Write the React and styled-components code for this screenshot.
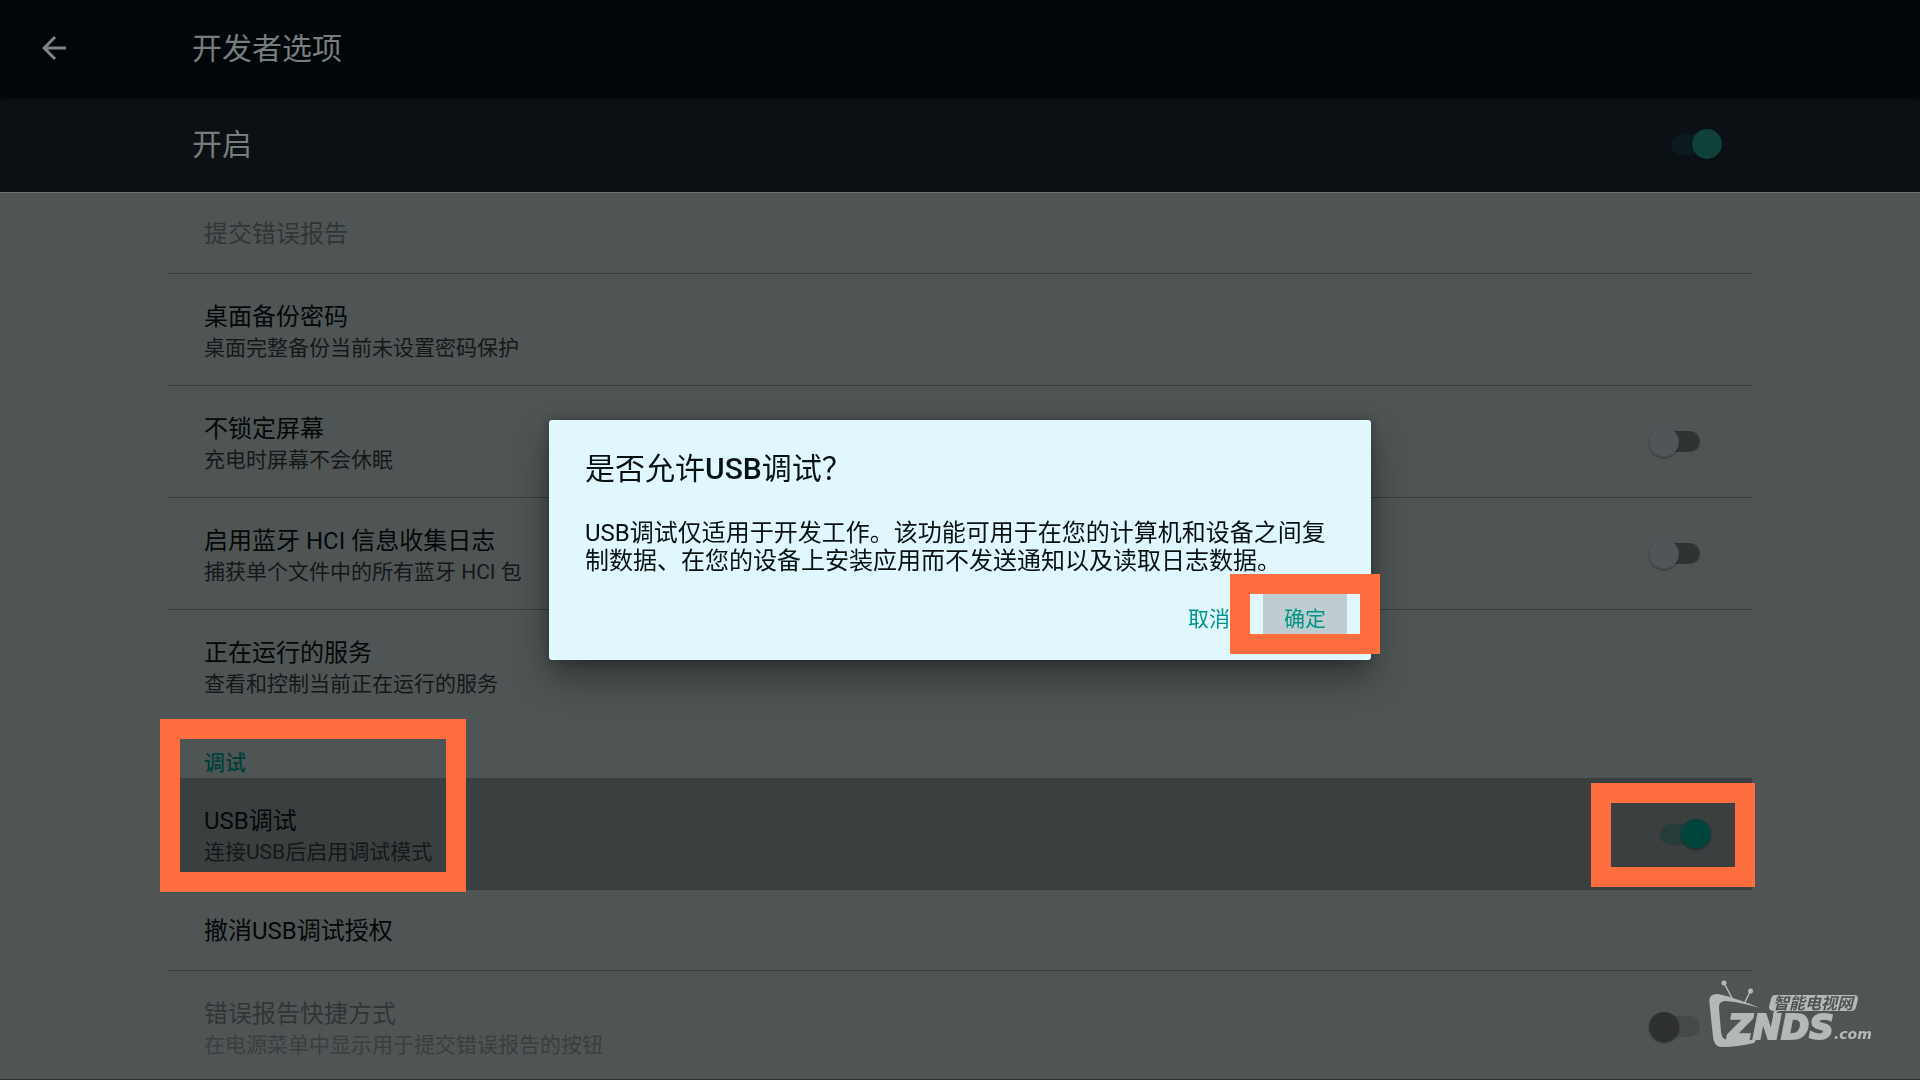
import React, { useState } from 'react'
import styled, { createGlobalStyle } from 'styled-components'
import { MdArrowBack } from 'react-icons/md'

const GlobalStyle = createGlobalStyle`
  * {
    box-sizing: border-box;
  }

  body {
    margin: 0;
    background: #4f5555;
    font-family: Roboto, 'Noto Sans CJK SC', sans-serif;
  }
`

const Page = styled.div`
  display: flex;
  flex-direction: column;
  height: 100vh;
  overflow: hidden;
`

const Header = styled.header`
  position: relative;
  display: flex;
  align-items: center;
  gap: 120px;
  height: 96px;
  padding: 0 36px;
  background: #010708;
  box-shadow: 0 2px 3px #010708;
  color: #777c7d;
  flex-shrink: 0;
`

const BackButton = styled.button`
  display: flex;
  padding: 0;
  border: 0;
  background: none;
  color: #7d8282;
  font-size: 36px;
`

const Title = styled.h1`
  margin: 0;
  padding-top: 2px;
  font-size: 30px;
  font-weight: 400;
  line-height: 36px;
`

const MasterBar = styled.div`
  display: flex;
  align-items: center;
  justify-content: space-between;
  height: 96px;
  padding: 0 198px 0 192px;
  background: #0a1013;
  color: #777c7d;
  flex-shrink: 0;
`

const MasterLabel = styled.label`
  padding-top: 2px;
  font-size: 30px;
  line-height: 36px;
`

const Switch = styled.input.attrs({ type: 'checkbox', role: 'switch' })`
  appearance: none;
  display: grid;
  align-items: center;
  width: 62px;
  height: 32px;
  margin: 0;
  flex-shrink: 0;

  &::before,
  &::after {
    content: '';
    grid-area: 1 / 1;
  }

  &::before {
    height: 21px;
    margin: 0 11px;
    border-radius: 11px;
    background: #303333;
  }

  &::after {
    width: 30px;
    height: 30px;
    border-radius: 50%;
    background: #505657;
    box-shadow: 0 1px 2px rgba(0, 0, 0, 0.4);
  }

  &:checked::before {
    background: ${props => (props.$dark ? '#0a1a1e' : '#263c39')};
  }

  &:checked::after {
    justify-self: end;
    background: ${props => (props.$dark ? '#10403a' : '#00463d')};
  }

  &:disabled::before {
    background: #444949;
  }

  &:disabled::after {
    background: #2f3131;
  }
`

const List = styled.main`
  flex: 1;
  min-height: 0;
  overflow: hidden;
  padding: 0 168px;
  border-top: 1px solid #6c7272;
  border-bottom: 1px solid #2e3232;
  background: #4f5555;
`

const Row = styled.div`
  position: relative;
  display: flex;
  align-items: center;
  justify-content: space-between;
  min-height: ${props => (props.$single ? 81 : props.$last ? 111 : 112)}px;
  padding: 0 41px 0 36px;
  border-bottom: ${props =>
    props.$last || props.$active ? 0 : '1px solid #393d3e'};
  background: ${props => (props.$active ? '#3c3f40' : 'none')};
`

const RowText = styled.div`
  padding-top: ${props => (props.$single ? 2 : 4)}px;
`

const RowLabel = styled.label`
  display: block;
  color: ${props => (props.$disabled ? '#303535' : '#040808')};
  font-size: 24px;
  line-height: 32px;
`

const Summary = styled.span`
  display: block;
  color: ${props => (props.$disabled ? '#393e3e' : '#141818')};
  font-size: 21px;
  line-height: 30px;
`

const DebugGroup = styled.section`
  position: relative;
`

const Category = styled.h2`
  display: flex;
  align-items: flex-end;
  height: 57px;
  margin: 0;
  padding: 0 36px;
  color: #003f38;
  font-size: 21px;
  font-weight: 500;
  line-height: 30px;
`

// orange callout drawn over whatever it points at
const Callout = styled.div`
  position: absolute;
  z-index: 1;
  border: 20px solid #ff6e3e;
  pointer-events: none;
`

const GroupCallout = styled(Callout)`
  top: -2px;
  left: -8px;
  width: 306px;
  height: 173px;
`

const SwitchCallout = styled(Callout)`
  top: 5px;
  right: -3px;
  width: 164px;
  height: 104px;
`

const OkCallout = styled(Callout)`
  top: -19px;
  left: -33px;
  width: 150px;
  height: 80px;
`

const Scrim = styled.div`
  position: fixed;
  inset: 0;
  display: flex;
  align-items: center;
  justify-content: center;
`

const Dialog = styled.div`
  width: 822px;
  padding: 29px 24px 15px 36px;
  border-radius: 3px;
  background: #e0f7fe;
  box-shadow: 0 18px 36px rgba(0, 0, 0, 0.4), 0 0 12px rgba(0, 0, 0, 0.3);
  color: #0b1011;
`

const DialogTitle = styled.h2`
  margin: 0 0 30px;
  font-size: 30px;
  font-weight: 400;
  line-height: 40px;

  b {
    font-weight: 500;
  }
`

const DialogText = styled.p`
  margin: 0 12px 0 0;
  font-size: 24px;
  line-height: 28px;
`

const Actions = styled.div`
  display: flex;
  justify-content: flex-end;
  gap: 12px;
  padding-top: 18px;
`

const ActionButton = styled.button`
  position: relative;
  width: 84px;
  height: 52px;
  padding: 0;
  border: 0;
  background: ${props => (props.$focused ? '#bfcdd1' : 'none')};
  color: #009587;
  font-family: inherit;
  font-size: 21px;
  line-height: 52px;
`

const Watermark = styled.svg`
  position: fixed;
  right: 40px;
  bottom: 25px;
  width: 180px;
  height: 80px;
`

const settings = [
  { id: 'report', label: '提交错误报告', single: true, disabled: true },
  {
    id: 'backup',
    label: '桌面备份密码',
    summary: '桌面完整备份当前未设置密码保护',
  },
  {
    id: 'awake',
    label: '不锁定屏幕',
    summary: '充电时屏幕不会休眠',
    toggle: true,
  },
  {
    id: 'hci',
    label: '启用蓝牙 HCI 信息收集日志',
    summary: '捕获单个文件中的所有蓝牙 HCI 包',
    toggle: true,
  },
  {
    id: 'services',
    label: '正在运行的服务',
    summary: '查看和控制当前正在运行的服务',
    last: true,
  },
]

const Setting = ({ item, children }) => {
  const [on, setOn] = useState(!!item.on)

  return (
    <Row $single={item.single} $last={item.last} $active={item.active}>
      <RowText $single={item.single}>
        <RowLabel
          htmlFor={item.toggle ? item.id : undefined}
          $disabled={item.disabled}
        >
          {item.label}
        </RowLabel>
        {item.summary && (
          <Summary $disabled={item.disabled}>{item.summary}</Summary>
        )}
      </RowText>
      {item.toggle && (
        <Switch
          id={item.id}
          checked={on}
          disabled={item.disabled}
          onChange={() => setOn(!on)}
        />
      )}
      {children}
    </Row>
  )
}

const Logo = () => (
  <Watermark viewBox="0 0 180 80" fill="#b4b8b8" aria-label="ZNDS.com">
    <circle cx="24" cy="8" r="2.5" />
    <circle cx="50.5" cy="16" r="2.5" />
    <path d="M24 8L32 23M50.5 16L45 27" stroke="#b4b8b8" strokeWidth="1.5" />
    <path d="M60 33C46 27 32 22 18 19C11 19 9 22 9.500 28L13 62C14 69 17 72 22 72C34 72 45 70 54 68L56 65L30 65C24 65 22 63 21 57L19 33C19 28 21 26 26 26C38 27 49 30 60 33Z" />
    <path d="M75 20H154Q158 20 158 24L156 32Q155 36 151 36H79L73 40L74 36Q69 36 69 32L71 24Q72 20 75 20Z" />
    <text
      x="73"
      y="34"
      fill="#4f5555"
      fontSize="16"
      fontWeight="700"
      fontStyle="italic"
      fontFamily="'Noto Sans CJK SC', sans-serif"
    >
      智能电视网
    </text>
    <text
      x="28"
      y="64"
      fontSize="34"
      fontWeight="700"
      fontStyle="italic"
      fontFamily="'DejaVu Sans', sans-serif"
      stroke="#b4b8b8"
      strokeWidth="2"
    >
      ZNDS
    </text>
    <text
      x="134"
      y="64"
      fontSize="14"
      fontWeight="700"
      fontStyle="italic"
      fontFamily="'DejaVu Sans', sans-serif"
    >
      .com
    </text>
  </Watermark>
)

const App = () => {
  const [enabled, setEnabled] = useState(true)
  const [open, setOpen] = useState(true)

  return (
    <Page>
      <GlobalStyle />
      <Header>
        <BackButton aria-label="返回">
          <MdArrowBack />
        </BackButton>
        <Title>开发者选项</Title>
      </Header>
      <MasterBar>
        <MasterLabel htmlFor="master">开启</MasterLabel>
        <Switch
          id="master"
          $dark
          checked={enabled}
          onChange={() => setEnabled(!enabled)}
        />
      </MasterBar>
      <List>
        {settings.map(item => (
          <Setting key={item.id} item={item} />
        ))}
        <DebugGroup>
          <Category>调试</Category>
          <Setting
            item={{
              id: 'usb',
              label: 'USB调试',
              summary: '连接USB后启用调试模式',
              toggle: true,
              on: true,
              active: true,
            }}
          >
            <SwitchCallout />
          </Setting>
          <GroupCallout />
        </DebugGroup>
        <Setting item={{ id: 'revoke', label: '撤消USB调试授权', single: true }} />
        <Setting
          item={{
            id: 'shortcut',
            label: '错误报告快捷方式',
            summary: '在电源菜单中显示用于提交错误报告的按钮',
            toggle: true,
            disabled: true,
          }}
        />
      </List>
      {open && (
        <Scrim>
          <Dialog role="dialog" aria-labelledby="dialog-title">
            <DialogTitle id="dialog-title">
              是否允许<b>USB</b>调试？
            </DialogTitle>
            <DialogText>
              USB调试仅适用于开发工作。该功能可用于在您的计算机和设备之间复制数据、在您的设备上安装应用而不发送通知以及读取日志数据。
            </DialogText>
            <Actions>
              <ActionButton onClick={() => setOpen(false)}>取消</ActionButton>
              <ActionButton $focused onClick={() => setOpen(false)}>
                确定
                <OkCallout />
              </ActionButton>
            </Actions>
          </Dialog>
        </Scrim>
      )}
      <Logo />
    </Page>
  )
}

export default App
